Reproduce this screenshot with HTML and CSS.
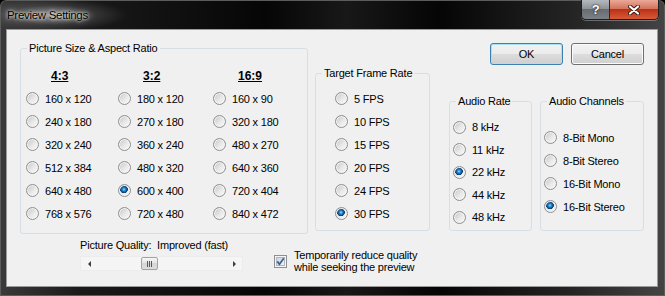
FILE: index.html
```html
<!DOCTYPE html>
<html lang="en">
<head>
  <meta charset="UTF-8">
  <title>Preview Settings</title>
  <link rel="stylesheet" href="styles.css">
</head>
<body>
<div class="window">
  <div class="titlebar">
    <span class="title">Preview Settings</span>
    <div class="caption">
      <span class="cap help">?</span>
      <span class="cap close">
        <svg width="12" height="10" viewBox="0 0 12 10">
          <path d="M2 1.5 L10 8.5 M10 1.5 L2 8.5" stroke="#3a1a12" stroke-width="4" stroke-linecap="round"/>
          <path d="M2 1.5 L10 8.5 M10 1.5 L2 8.5" stroke="#fff" stroke-width="2.2" stroke-linecap="round"/>
        </svg>
      </span>
    </div>
  </div>

  <div class="client">
    <div class="top">
      <fieldset class="group sizes">
        <legend>Picture Size &amp; Aspect Ratio</legend>
        <div class="size-grid">
          <span class="ratio">4:3</span>
          <span class="ratio">3:2</span>
          <span class="ratio">16:9</span>

          <label class="opt"><input type="radio" name="size">160 x 120</label>
          <label class="opt"><input type="radio" name="size">180 x 120</label>
          <label class="opt"><input type="radio" name="size">160 x 90</label>

          <label class="opt"><input type="radio" name="size">240 x 180</label>
          <label class="opt"><input type="radio" name="size">270 x 180</label>
          <label class="opt"><input type="radio" name="size">320 x 180</label>

          <label class="opt"><input type="radio" name="size">320 x 240</label>
          <label class="opt"><input type="radio" name="size">360 x 240</label>
          <label class="opt"><input type="radio" name="size">480 x 270</label>

          <label class="opt"><input type="radio" name="size">512 x 384</label>
          <label class="opt"><input type="radio" name="size">480 x 320</label>
          <label class="opt"><input type="radio" name="size">640 x 360</label>

          <label class="opt"><input type="radio" name="size">640 x 480</label>
          <label class="opt"><input type="radio" name="size" checked>600 x 400</label>
          <label class="opt"><input type="radio" name="size">720 x 404</label>

          <label class="opt"><input type="radio" name="size">768 x 576</label>
          <label class="opt"><input type="radio" name="size">720 x 480</label>
          <label class="opt"><input type="radio" name="size">840 x 472</label>
        </div>
      </fieldset>

      <fieldset class="group fps">
        <legend>Target Frame Rate</legend>
        <div class="options">
          <label class="opt"><input type="radio" name="fps">5 FPS</label>
          <label class="opt"><input type="radio" name="fps">10 FPS</label>
          <label class="opt"><input type="radio" name="fps">15 FPS</label>
          <label class="opt"><input type="radio" name="fps">20 FPS</label>
          <label class="opt"><input type="radio" name="fps">24 FPS</label>
          <label class="opt"><input type="radio" name="fps" checked>30 FPS</label>
        </div>
      </fieldset>

      <div class="side">
        <div class="actions">
          <button class="btn default">OK</button>
          <button class="btn">Cancel</button>
        </div>
        <div class="audio">
          <fieldset class="group rate">
            <legend>Audio Rate</legend>
            <div class="options">
              <label class="opt"><input type="radio" name="rate">8 kHz</label>
              <label class="opt"><input type="radio" name="rate">11 kHz</label>
              <label class="opt"><input type="radio" name="rate" checked>22 kHz</label>
              <label class="opt"><input type="radio" name="rate">44 kHz</label>
              <label class="opt"><input type="radio" name="rate">48 kHz</label>
            </div>
          </fieldset>
          <fieldset class="group channels">
            <legend>Audio Channels</legend>
            <div class="options">
              <label class="opt"><input type="radio" name="channels">8-Bit Mono</label>
              <label class="opt"><input type="radio" name="channels">8-Bit Stereo</label>
              <label class="opt"><input type="radio" name="channels">16-Bit Mono</label>
              <label class="opt"><input type="radio" name="channels" checked>16-Bit Stereo</label>
            </div>
          </fieldset>
        </div>
      </div>
    </div>

    <div class="bottom">
      <div class="quality">
        <div class="quality-label">Picture Quality:&nbsp; Improved (fast)</div>
        <div class="scrollbar">
          <span class="arrow"><span class="tri left"></span></span>
          <span class="track"><span class="thumb"><span class="grip"></span></span></span>
          <span class="arrow"><span class="tri right"></span></span>
        </div>
      </div>
      <label class="check">
        <span class="box">
          <svg width="13" height="13" viewBox="0 0 13 13">
            <defs>
              <linearGradient id="cb" x1="0" y1="0" x2="1" y2="1">
                <stop offset="0" stop-color="#cbd3dc"/>
                <stop offset="1" stop-color="#f4f6f9"/>
              </linearGradient>
            </defs>
            <rect x="0.5" y="0.5" width="12" height="12" fill="#f6f6f6" stroke="#8e8f8f"/>
            <rect x="2.5" y="2.5" width="8" height="8" fill="url(#cb)" stroke="#aeb8c4"/>
            <path d="M3.3 6.4 L5.4 9.2 L9.8 3.2" fill="none" stroke="#4a5f97" stroke-width="1.8"/>
          </svg>
        </span>
        <span class="check-text">Temporarily reduce quality<br>while seeking the preview</span>
      </label>
    </div>
  </div>
</div>
</body>
</html>
```

FILE: styles.css
```css
* {
  box-sizing: border-box;
}
body {
  margin: 0;
  background: #000;
  font-family: "Liberation Sans", Arial, sans-serif;
  font-size: 11px;
  letter-spacing: -0.2px;
  color: #000;
}
.window {
  width: 665px;
  height: 296px;
  display: flex;
  flex-direction: column;
  border-radius: 6px 6px 0 0;
  background:
    radial-gradient(ellipse 75px 16px at 52px 15px, rgba(190, 190, 190, 0.7), rgba(110, 110, 110, 0.3) 60%, transparent),
    linear-gradient(90deg, #3a3a3a 0, #1a1a1a 12%, #060606 40%, #181818 52%, #050505 66%, #242424 86%, #444 100%);
  box-shadow: inset 0 0 0 1px #5c5c5c;
}
.titlebar {
  height: 29px;
  flex: none;
  display: flex;
}
.title {
  padding-left: 7px;
  line-height: 30px;
  font-size: 11.5px;
  letter-spacing: -0.3px;
  color: #000;
  text-shadow: 0 0 3px #fff, 0 0 6px rgba(255, 255, 255, 0.8);
}
.caption {
  display: flex;
  align-self: flex-start;
  margin-left: auto;
  margin-right: 6px;
  border: 1px solid #1e1e1e;
  border-top: 0;
  border-radius: 0 0 5px 5px;
  overflow: hidden;
  box-shadow: 0 1px 0 rgba(255, 255, 255, 0.3);
}
.cap {
  height: 19px;
  display: flex;
  align-items: center;
  justify-content: center;
  color: #fff;
  font-weight: bold;
  font-size: 13px;
}
.help {
  width: 28px;
  border-right: 1px solid #2a2a2a;
  background: linear-gradient(#b4b9be 0, #8e9499 45%, #676c71 50%, #7b8187 100%);
  text-shadow: 0 0 2px #222, 0 0 1px #222;
}
.close {
  width: 48px;
  background: linear-gradient(#eaa998 0, #d5745c 45%, #b93217 50%, #d85a36 100%);
}

.client {
  flex: none;
  height: 258px;
  margin: 0 7px 0 6px;
  background: #f0f0f0;
  border: 1px solid #9a9a9a;
}
.top {
  display: flex;
  align-items: flex-start;
  padding-left: 13px;
}
.group {
  min-width: 0;
  margin: 0;
  padding: 0;
  border: 1px solid #d5dfe5;
  border-radius: 3px;
}
.group legend {
  margin-left: 6px;
  padding: 0 2px;
  line-height: 14px;
  white-space: nowrap;
}
.sizes {
  width: 288px;
  height: 193px;
  margin-top: 11px;
}
.size-grid {
  display: grid;
  grid-template-columns: 92px 95px 1fr;
  grid-auto-rows: 23px;
  align-items: center;
  padding: 9px 0 0 5px;
}
.ratio {
  padding-left: 25px;
  font-size: 12px;
  font-weight: bold;
  text-decoration: underline;
  letter-spacing: 0;
}
.fps {
  width: 115px;
  height: 165px;
  margin: 36px 0 0 7px;
}
.options {
  display: grid;
  grid-auto-rows: 23px;
  align-items: center;
}
.fps .options {
  padding: 7px 0 0 19px;
}
.opt {
  display: flex;
  align-items: center;
}
.opt input {
  appearance: none;
  width: 13px;
  height: 13px;
  margin: 0 6px 0 0;
  border: 1px solid #8e8f8f;
  border-radius: 50%;
  background: linear-gradient(135deg, #c4c4c4, #e9e9e9 55%, #fbfbfb);
  box-shadow: inset 0 0 0 1px #f4f4f4;
}
.opt input:checked {
  background:
    radial-gradient(circle at 45% 40%, #8fe0ff 0, #2c8ad0 1.5px, #0d4d8f 3px, #0b3a70 3.6px, transparent 4.1px),
    linear-gradient(135deg, #c4c4c4, #e9e9e9 55%, #fbfbfb);
}

.side {
  width: 195px;
  margin-left: 19px;
  display: flex;
  flex-direction: column;
}
.actions {
  display: flex;
  justify-content: flex-end;
  gap: 8px;
  margin-top: 13px;
}
.btn {
  width: 73px;
  height: 22px;
  padding: 0;
  font-family: inherit;
  font-size: 11px;
  letter-spacing: -0.2px;
  color: #000;
  border: 1px solid #707070;
  border-radius: 3px;
  background: linear-gradient(#f2f2f2 0, #ebebeb 50%, #dddddd 50%, #cfcfcf 100%);
  box-shadow: inset 0 0 0 1px #fbfbfb;
}
.btn.default {
  border-color: #3c7fb1;
  box-shadow: inset 0 0 0 1px #a6e1fa;
}
.audio {
  display: flex;
  gap: 8px;
  margin-top: 29px;
}
.rate {
  width: 83px;
  height: 137px;
}
.rate .options {
  grid-auto-rows: 22.5px;
  padding: 8px 0 0 3px;
}
.channels {
  width: 104px;
  height: 137px;
}
.channels .options {
  padding: 18px 0 0 3px;
}

.bottom {
  display: flex;
  align-items: flex-start;
  padding-left: 73px;
  margin-top: 4px;
}
.quality {
  width: 163px;
}
.quality-label {
  line-height: 14px;
}
.scrollbar {
  display: flex;
  height: 15px;
  margin-top: 4px;
  background: #f5f5f5;
  border: 1px solid #ececec;
}
.arrow {
  width: 16px;
  display: flex;
  align-items: center;
  justify-content: center;
}
.tri {
  width: 0;
  height: 0;
  border-top: 3px solid transparent;
  border-bottom: 3px solid transparent;
}
.tri.left {
  border-right: 3px solid #3c3c3c;
}
.tri.right {
  border-left: 3px solid #3c3c3c;
}
.track {
  flex: 1;
  display: flex;
}
.thumb {
  width: 17px;
  margin-left: 44px;
  display: flex;
  align-items: center;
  justify-content: center;
  border: 1px solid #a3a3a3;
  border-radius: 2px;
  background: linear-gradient(#f6f6f6, #e2e2e2 50%, #d6d6d6 50%, #dcdcdc);
}
.grip {
  width: 5px;
  height: 6px;
  background: repeating-linear-gradient(90deg, #5a5a5a 0 1px, transparent 1px 2px);
}
.check {
  display: flex;
  align-items: center;
  margin: 11px 0 0 31px;
}
.box {
  display: flex;
  margin-right: 7px;
}
.check-text {
  line-height: 12px;
}
```
